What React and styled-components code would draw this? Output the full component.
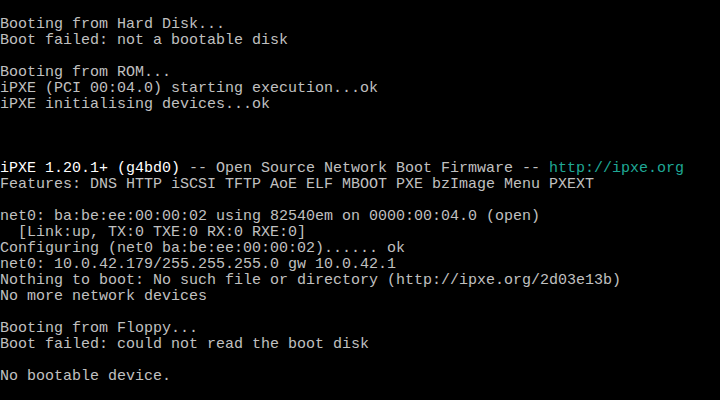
import React from "react";
import styled, { createGlobalStyle } from "styled-components";

const Global = createGlobalStyle`
  html, body { margin: 0; padding: 0; background: #000; }
  body { width: 720px; height: 400px; overflow: hidden; }
`;

const Screen = styled.main`
  box-sizing: border-box;
  width: 720px;
  height: 400px;
  padding-top: 1px;
  background: #000;
  display: flex;
  flex-direction: column;
  font-family: "Liberation Mono", "DejaVu Sans Mono", monospace;
  font-size: 15px;
  color: #c0c0c0;
  overflow: hidden;
`;

const Line = styled.div`
  flex: none;
  height: 16px;
  line-height: 16px;
  white-space: pre;
`;

const Bright = styled.span`
  color: #ffffff;
`;

const Link = styled.span`
  color: #1fa896;
`;

const lines = [
  "",
  "Booting from Hard Disk...",
  "Boot failed: not a bootable disk",
  "",
  "Booting from ROM...",
  "iPXE (PCI 00:04.0) starting execution...ok",
  "iPXE initialising devices...ok",
  "",
  "",
  "",
  "__IPXE__",
  "Features: DNS HTTP iSCSI TFTP AoE ELF MBOOT PXE bzImage Menu PXEXT",
  "",
  "net0: ba:be:ee:00:00:02 using 82540em on 0000:00:04.0 (open)",
  "  [Link:up, TX:0 TXE:0 RX:0 RXE:0]",
  "Configuring (net0 ba:be:ee:00:00:02)...... ok",
  "net0: 10.0.42.179/255.255.255.0 gw 10.0.42.1",
  "Nothing to boot: No such file or directory (http://ipxe.org/2d03e13b)",
  "No more network devices",
  "",
  "Booting from Floppy...",
  "Boot failed: could not read the boot disk",
  "",
  "No bootable device.",
  "",
];

export default function App() {
  return (
    <>
      <Global />
      <Screen>
        {lines.map((text, i) =>
          text === "__IPXE__" ? (
            <Line key={i}>
              <Bright>iPXE 1.20.1+ (g4bd0)</Bright>
              {" -- Open Source Network Boot Firmware -- "}
              <Link>http://ipxe.org</Link>
            </Line>
          ) : (
            <Line key={i}>{text}</Line>
          )
        )}
      </Screen>
    </>
  );
}
